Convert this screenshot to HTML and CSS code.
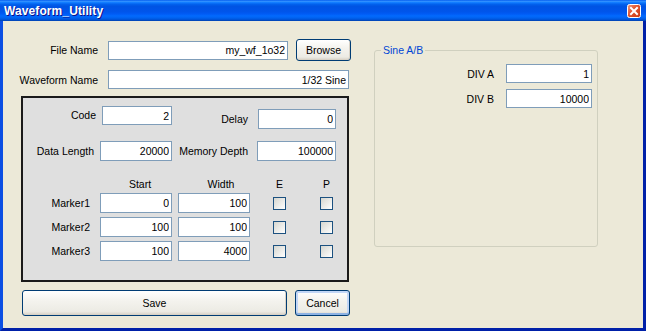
FILE: index.html
```html
<!DOCTYPE html>
<html>
<head>
<meta charset="UTF-8">
<title>Waveform_Utility</title>
<link rel="stylesheet" href="styles.css">
</head>
<body>

<div class="window">
  <div class="titlebar">
    <span class="title">Waveform_Utility</span>
    <span class="close">
      <svg width="14" height="14" viewBox="0 0 14 14">
        <defs>
          <linearGradient id="cl" x1="0" y1="0" x2="1" y2="1">
            <stop offset="0" stop-color="#f09a7e"/>
            <stop offset="0.45" stop-color="#e0532e"/>
            <stop offset="1" stop-color="#c63a12"/>
          </linearGradient>
        </defs>
        <rect x="0.5" y="0.5" width="13" height="13" rx="2" fill="url(#cl)" stroke="#fff"/>
        <path d="M4 4 L10 10 M10 4 L4 10" stroke="#fff" stroke-width="2" stroke-linecap="square"/>
      </svg>
    </span>
  </div>

  <div class="content">
    <div class="left">
      <div class="names">
        <label>File Name</label>
        <input class="field fname" value="my_wf_1o32">
        <button class="btn browse">Browse</button>
        <label>Waveform Name</label>
        <input class="field wname" value="1/32 Sine">
      </div>

      <div class="panel">
        <div class="params">
          <label>Code</label>
          <input class="field code" value="2">
          <label class="drop">Delay</label>
          <input class="field delay drop" value="0">
          <label>Data Length</label>
          <input class="field len" value="20000">
          <label>Memory Depth</label>
          <input class="field depth" value="100000">
        </div>

        <div class="markers">
          <span></span>
          <span class="head h-start">Start</span>
          <span class="head h-width">Width</span>
          <span class="head">E</span>
          <span class="head">P</span>

          <label>Marker1</label>
          <input class="field" value="0">
          <input class="field" value="100">
          <input type="checkbox" class="check">
          <input type="checkbox" class="check">

          <label>Marker2</label>
          <input class="field" value="100">
          <input class="field" value="100">
          <input type="checkbox" class="check">
          <input type="checkbox" class="check">

          <label>Marker3</label>
          <input class="field" value="100">
          <input class="field" value="4000">
          <input type="checkbox" class="check">
          <input type="checkbox" class="check">
        </div>
      </div>

      <div class="actions">
        <button class="btn save">Save</button>
        <button class="btn cancel">Cancel</button>
      </div>
    </div>

    <fieldset class="group">
      <legend>Sine A/B</legend>
      <div class="divs">
        <label>DIV A</label>
        <input class="field" value="1">
        <label>DIV B</label>
        <input class="field" value="10000">
      </div>
    </fieldset>
  </div>
</div>

</body>
</html>
```

FILE: styles.css
```css
body{margin:0;font-family:"Liberation Sans",Arial,sans-serif;font-size:10.5px;color:#000}
.window{width:646px;height:331px;display:flex;flex-direction:column;background:#ece9d8}

/* title bar */
.titlebar{
 height:21px;display:flex;justify-content:space-between;align-items:center;padding:0 5px 0 4px;
 background:linear-gradient(#0058ee 0%,#3593ff 6%,#127dff 12%,#0262ee 20%,#0054e3 30%,#0055eb 56%,#005bf5 66%,#026afe 76%,#0062ef 86%,#0052d6 94%,#0040ab 100%)
}
.title{color:#fff;font-weight:bold;font-size:12px;text-shadow:1px 1px #0f1089;letter-spacing:0.1px}
.close{display:flex;margin-top:1px}

.content{
 flex:1;display:flex;align-items:flex-start;padding:18px 0 0 10px;
 border:3px solid #0020a8;border-top:none;border-left-color:#0b4fe3
}

/* inputs and buttons */
.field{
 box-sizing:border-box;height:20px;margin:0;padding:0 2px 0 0;border:1px solid #7f9db9;background:#fff;
 font:inherit;color:#000;text-align:right;outline:none
}
.btn{
 box-sizing:border-box;margin:0;padding:0;font:inherit;color:#000;
 border:1px solid #003c74;border-radius:3px;
 background:linear-gradient(#fff,#f4f3ee 40%,#ecebe4 85%,#d6d0c5);
 box-shadow:inset -1px -1px 0 #d8d2c6
}
.check{
 appearance:none;-webkit-appearance:none;box-sizing:border-box;width:13px;height:13px;margin:0;
 border:1px solid #1c5180;background:linear-gradient(135deg,#d6d6cf,#fff);justify-self:center;align-self:center
}
label{text-align:right;white-space:nowrap}

/* left column */
.left{width:338px}
.names{display:grid;grid-template-columns:85px 190px 63px;row-gap:9px;align-items:center}
.names label{justify-self:end}
.fname{width:180px;height:19px;justify-self:end}
.browse{width:55px;height:22px;justify-self:end}
.wname{grid-column:2 / 4;width:241px;height:19px;margin-left:10px}

.panel{margin:7px 0 0 8px;width:328px;box-sizing:border-box;border:2px solid #1a1a1a;background:#dfdfdf;padding:8px 0 19px}

.params{display:grid;grid-template-columns:71px 78px 76px 88px;row-gap:12px;align-items:start}
.params label{line-height:20px;justify-self:end}
.params input{justify-self:end}
.params .code{width:70px;height:19px}
.params label:first-child{line-height:19px;margin-right:-2px}
.params .drop{margin-top:3px}
.params .delay{width:78px}
.params .len{width:72px}
.params .depth{width:79px}

.markers{display:grid;grid-template-columns:71px 78px 78px 59px 35px;row-gap:4px;align-items:center;margin-top:18px}
.markers label{padding-right:4px;line-height:20px}
.markers .field{width:72px;justify-self:end}
.head{height:10px;line-height:10px;text-align:center}
.h-start{padding-left:14px}
.h-width{padding-left:20px}

.actions{display:flex;gap:8px;margin:8px 0 0 9px}
.save{width:265px;height:26px}
.cancel{width:55px;height:26px;box-shadow:inset 0 -2px 0 #8db2e3,inset 0 0 0 2px #c2d6f6}

/* right group */
.group{
 box-sizing:border-box;width:224px;height:203px;margin:5px 0 0 23px;padding:0 5px 0 6px;
 border:1px solid #d0d0bf;border-radius:3px
}
.group legend{color:#0046d5;padding:0 2px}
.divs{display:grid;grid-template-columns:auto 86px;justify-content:end;column-gap:12px;row-gap:6px;margin-top:8px;align-items:center}
.divs .field{height:19px}
```
